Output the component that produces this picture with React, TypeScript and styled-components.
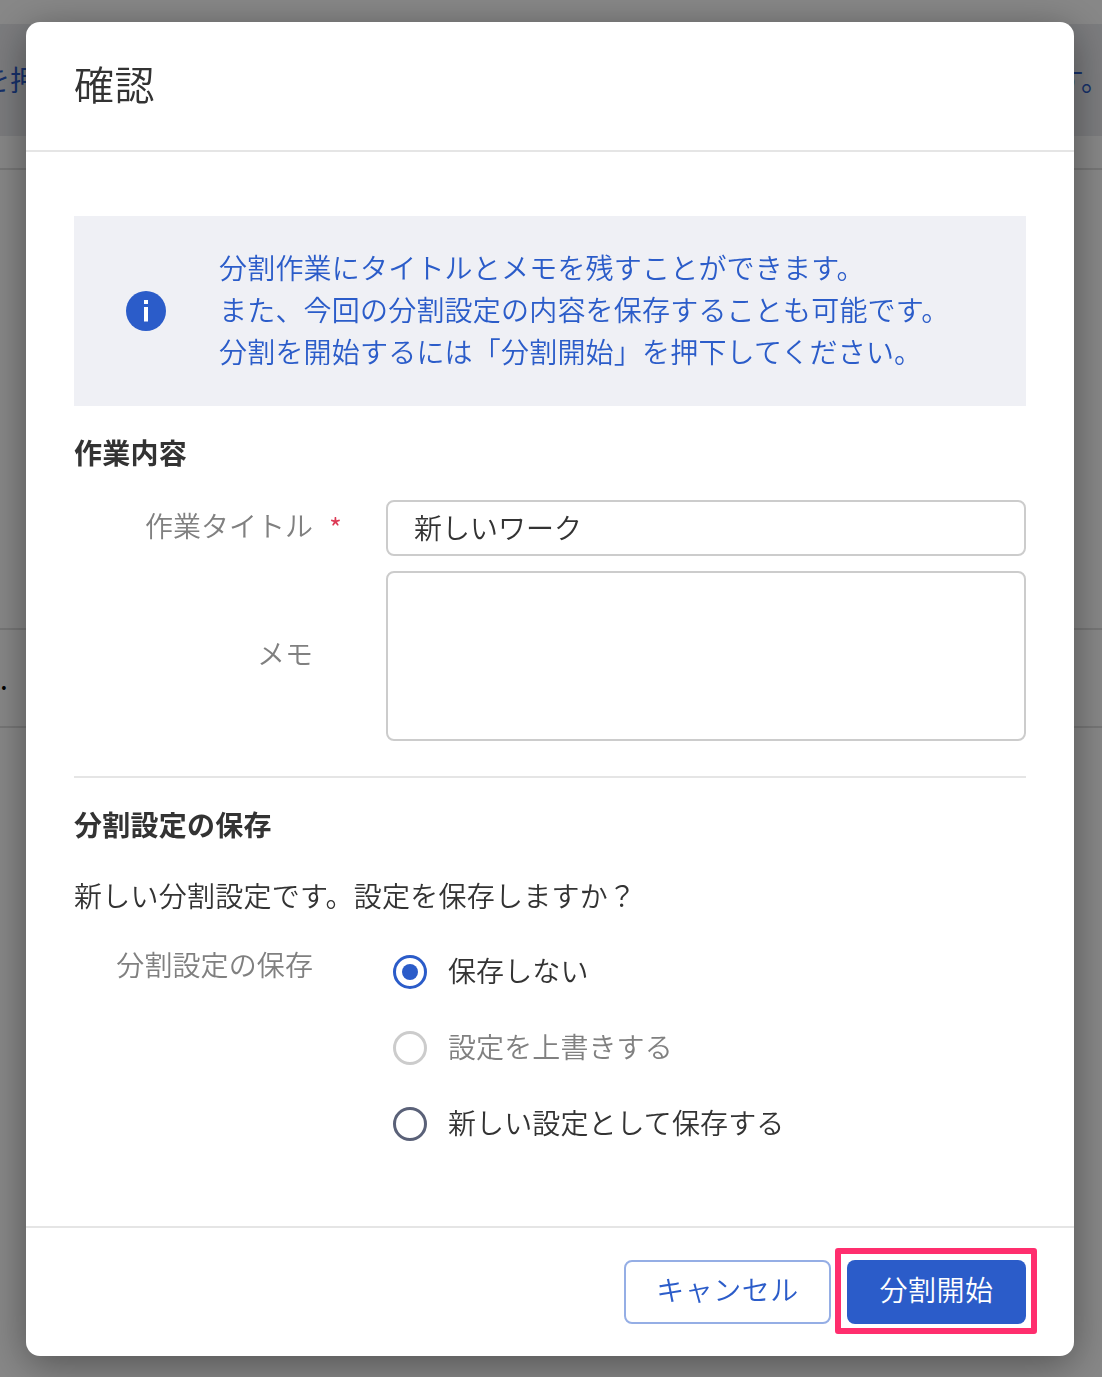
import styled, { createGlobalStyle } from "styled-components";

const GlobalStyle = createGlobalStyle`
  html, body {
    margin: 0;
    padding: 0;
    height: 100%;
    overflow: hidden;
    font-family: "Noto Sans CJK JP", "Noto Sans", sans-serif;
    color: #333;
  }
  * {
    box-sizing: border-box;
  }
`;

const Page = styled.div`
  width: 1102px;
  height: 1377px;
  background: #fff;
  overflow: hidden;
`;

const TopBar = styled.div`
  height: 24px;
  background: #fff;
`;

const Banner = styled.div`
  height: 112px;
  background: #e9eaee;
  display: flex;
  justify-content: space-between;
  align-items: center;
  font-size: 28px;
  line-height: 42px;
  color: #2b5cc9;
  white-space: nowrap;
  overflow: hidden;
`;

const BannerLeft = styled.span`
  margin-left: -18px;
  margin-top: -2px;
`;

const BannerRight = styled.span`
  margin-right: -7px;
  margin-top: -2px;
`;

const BackRow = styled.div<{ $height: number }>`
  height: ${(p) => p.$height}px;
  border-bottom: 2px solid #e0e0e0;
  font-size: 28px;
  line-height: 1;
  display: flex;
  align-items: center;
  color: #000;
`;

const Overlay = styled.div`
  position: fixed;
  inset: 0;
  padding: 22px 28px 21px 26px;
  background: rgba(0, 0, 0, 0.47);
`;

const Modal = styled.div`
  height: 100%;
  background: #fff;
  border-radius: 14px;
  box-shadow: 0 8px 40px rgba(0, 0, 0, 0.4);
  display: flex;
  flex-direction: column;
`;

const ModalHeader = styled.header`
  height: 130px;
  padding: 0 48px 6px;
  border-bottom: 2px solid #e5e5e5;
  display: flex;
  align-items: center;
`;

const ModalTitle = styled.h1`
  margin: 0;
  font-size: 40px;
  font-weight: 350;
  line-height: 1;
  letter-spacing: 0.5px;
  color: #333;
`;

const ModalBody = styled.div`
  flex: 1;
  padding: 64px 48px 0;
`;

const Notice = styled.div`
  height: 190px;
  background: #eff0f5;
  display: flex;
  align-items: center;
  padding-left: 52px;
  gap: 53px;
`;

const NoticeIcon = styled.svg`
  width: 40px;
  height: 40px;
  flex: none;
`;

const NoticeText = styled.p`
  margin: -4px 0 0;
  font-size: 28px;
  font-weight: 350;
  line-height: 42px;
  letter-spacing: 0.2px;
  color: #2b5cc9;
`;

const SectionTitle = styled.h2<{ $top?: number }>`
  margin: ${(p) => p.$top ?? 0}px 0 0;
  font-size: 28px;
  font-weight: 700;
  line-height: 40px;
  letter-spacing: 0.25px;
  color: #333;
`;

const FormGrid = styled.div`
  display: grid;
  grid-template-columns: 312px 1fr;
  row-gap: 15px;
  margin-top: 28px;
`;

const FieldLabel = styled.label<{ $required?: boolean }>`
  display: flex;
  align-items: center;
  justify-content: flex-end;
  padding: 0 ${(p) => (p.$required ? "45px" : "73px")} 6px 0;
  font-size: 28px;
  font-weight: 350;
  line-height: 1;
  color: #808080;
  position: relative;
`;

const RequiredMark = styled.span`
  position: absolute;
  right: 44px;
  top: 13px;
  font-size: 28px;
  font-weight: 350;
  line-height: 1;
  color: #dc3a55;
`;

const LabelText = styled.span<{ $shift?: number }>`
  margin-right: ${(p) => p.$shift ?? 0}px;
`;

const TextInput = styled.input`
  width: 100%;
  height: 56px;
  padding: 0 26px 2px;
  border: 2px solid #ccc;
  border-radius: 8px;
  font: inherit;
  font-size: 28px;
  font-weight: 350;
  color: #333;
  outline: none;
  background: #fff;
`;

const TextArea = styled.textarea`
  display: block;
  width: 100%;
  height: 170px;
  padding: 10px 26px;
  border: 2px solid #ccc;
  border-radius: 8px;
  font: inherit;
  font-size: 28px;
  resize: none;
  outline: none;
  background: #fff;
`;

const Divider = styled.hr`
  margin: 35px 0 0;
  border: 0;
  border-top: 2px solid #e5e5e5;
`;

const SaveSection = styled.section`
  padding-top: 26px;
`;

const Lead = styled.p`
  margin: 30px 0 0;
  font-size: 28px;
  font-weight: 350;
  line-height: 42px;
  letter-spacing: 0.25px;
  color: #333;
`;

const SaveRow = styled.div`
  display: grid;
  grid-template-columns: 312px 1fr;
  margin-top: 13px;
`;

const SaveLabel = styled.div`
  padding: 14px 73px 0 0;
  text-align: right;
  font-size: 28px;
  font-weight: 350;
  line-height: 42px;
  letter-spacing: 0.1px;
  color: #808080;
`;

const RadioList = styled.div`
  display: flex;
  flex-direction: column;
  padding-top: 22px;
  padding-left: 7px;
  gap: 34px;
`;

const RadioItem = styled.label<{ $disabled?: boolean }>`
  display: flex;
  align-items: center;
  gap: 21px;
  height: 42px;
  font-size: 28px;
  font-weight: 350;
  color: ${(p) => (p.$disabled ? "#808080" : "#333")};
`;

const RadioText = styled.span`
  margin-top: -4px;
  letter-spacing: 0.1px;
`;

const RadioCircle = styled.span<{ $state: "on" | "off" | "disabled" }>`
  width: 34px;
  height: 34px;
  flex: none;
  border-radius: 50%;
  border: 3px solid
    ${(p) =>
      p.$state === "on" ? "#2b5cc9" : p.$state === "disabled" ? "#ccc" : "#5a6178"};
  display: flex;
  align-items: center;
  justify-content: center;
  background: #fff;

  &::after {
    content: "";
    display: ${(p) => (p.$state === "on" ? "block" : "none")};
    width: 16px;
    height: 16px;
    border-radius: 50%;
    background: #2b5cc9;
  }
`;

const ModalFooter = styled.footer`
  height: 130px;
  border-top: 2px solid #e5e5e5;
  padding: 32px 48px 0;
  display: flex;
  justify-content: flex-end;
  align-items: flex-start;
  gap: 16px;
`;

const OutlineButton = styled.button`
  width: 207px;
  height: 64px;
  padding: 0 0 6px;
  border: 2px solid #95aee5;
  border-radius: 8px;
  background: #fff;
  font: inherit;
  font-size: 28px;
  font-weight: 350;
  letter-spacing: 0.5px;
  color: #2b5cc9;
`;

const PrimaryButton = styled.button`
  position: relative;
  width: 179px;
  height: 64px;
  padding: 0 0 6px;
  border: 0;
  border-radius: 8px;
  background: #2b5cc9;
  font: inherit;
  font-size: 28px;
  font-weight: 350;
  letter-spacing: 0.5px;
  color: #fff;

  &::after {
    content: "";
    position: absolute;
    left: -12px;
    right: -11px;
    top: -12px;
    bottom: -10px;
    border: 6px solid #ff2e6e;
    border-radius: 3px;
  }
`;

export default function App() {
  return (
    <>
      <GlobalStyle />
      <Page>
        <TopBar />
        <Banner>
          <BannerLeft>を押下してください</BannerLeft>
          <BannerRight>設定を保存できます。</BannerRight>
        </Banner>
        <BackRow $height={34} />
        <BackRow $height={460} />
        <BackRow $height={98}>.</BackRow>
      </Page>
      <Overlay>
        <Modal>
          <ModalHeader>
            <ModalTitle>確認</ModalTitle>
          </ModalHeader>
          <ModalBody>
            <Notice>
              <NoticeIcon viewBox="0 0 40 40" aria-hidden="true">
                <circle cx="20" cy="20" r="20" fill="#2b5cc9" />
                <rect x="18" y="9" width="4" height="4" fill="#fff" />
                <rect x="18" y="16" width="4" height="14.5" fill="#fff" />
              </NoticeIcon>
              <NoticeText>
                分割作業にタイトルとメモを残すことができます。
                <br />
                また、今回の分割設定の内容を保存することも可能です。
                <br />
                分割を開始するには「分割開始」を押下してください。
              </NoticeText>
            </Notice>
            <SectionTitle $top={26}>作業内容</SectionTitle>
            <FormGrid>
              <FieldLabel $required>
                <LabelText $shift={28}>作業タイトル</LabelText>
                <RequiredMark>*</RequiredMark>
              </FieldLabel>
              <TextInput readOnly value="新しいワーク" />
              <FieldLabel>メモ</FieldLabel>
              <TextArea readOnly />
            </FormGrid>
            <Divider />
            <SaveSection>
              <SectionTitle>分割設定の保存</SectionTitle>
              <Lead>新しい分割設定です。設定を保存しますか？</Lead>
              <SaveRow>
                <SaveLabel>分割設定の保存</SaveLabel>
                <RadioList>
                  <RadioItem>
                    <RadioCircle $state="on" />
                    <RadioText>保存しない</RadioText>
                  </RadioItem>
                  <RadioItem $disabled>
                    <RadioCircle $state="disabled" />
                    <RadioText>設定を上書きする</RadioText>
                  </RadioItem>
                  <RadioItem>
                    <RadioCircle $state="off" />
                    <RadioText>新しい設定として保存する</RadioText>
                  </RadioItem>
                </RadioList>
              </SaveRow>
            </SaveSection>
          </ModalBody>
          <ModalFooter>
            <OutlineButton>キャンセル</OutlineButton>
            <PrimaryButton>分割開始</PrimaryButton>
          </ModalFooter>
        </Modal>
      </Overlay>
    </>
  );
}
